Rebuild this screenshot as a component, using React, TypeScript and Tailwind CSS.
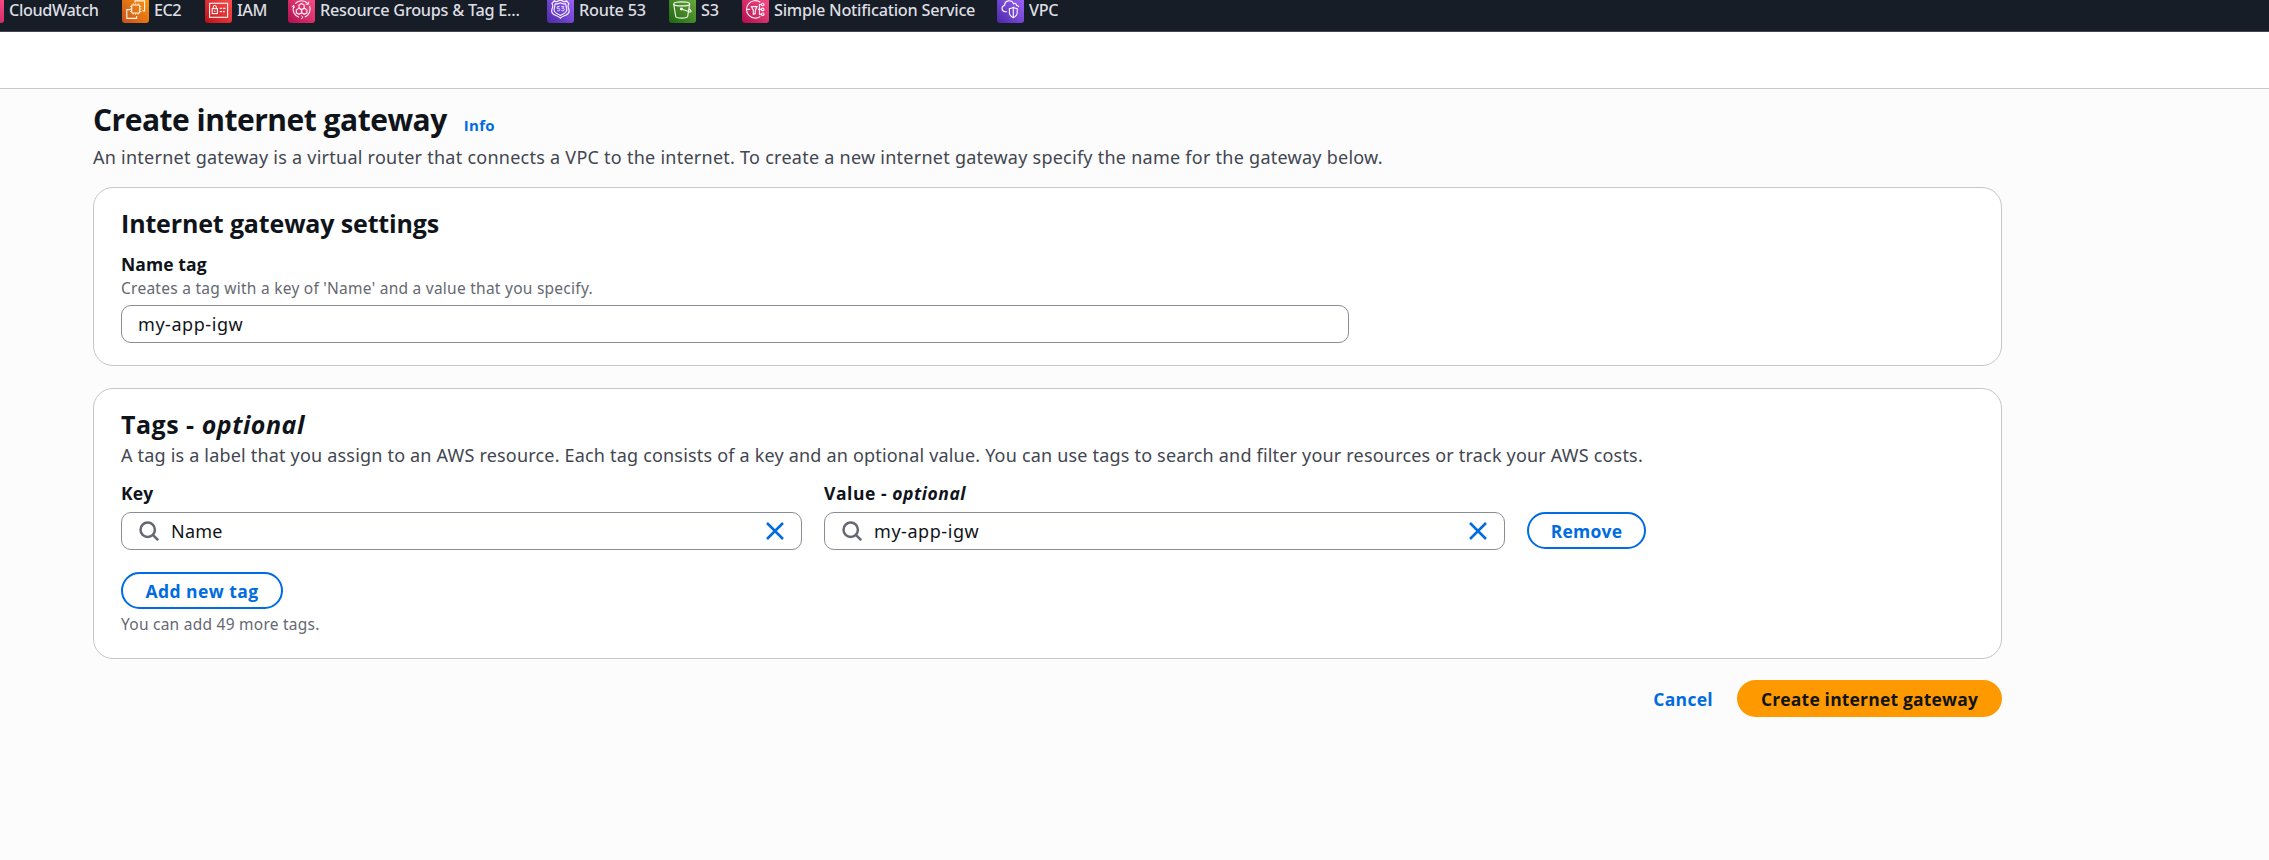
import type { ReactNode } from 'react';

function ServiceIcon({ gradient, children }: { gradient: string; children?: ReactNode }) {
  return (
    <span className={`block size-[27px] shrink-0 rounded-[3px] bg-linear-to-tr ${gradient}`}>
      <svg viewBox="0 0 27 27" className="size-full" fill="none" stroke="#fff" strokeOpacity="0.92" strokeWidth="1.15">
        {children}
      </svg>
    </span>
  );
}

const services: { label: string; width: string; tracking: string; gradient: string; glyph: ReactNode }[] = [
  {
    label: 'CloudWatch',
    width: 'w-[145px]',
    tracking: 'tracking-[-0.4px]',
    gradient: 'from-[#b0084d] to-[#ff4f8b]',
    glyph: <circle cx="12" cy="13" r="7" />,
  },
  {
    label: 'EC2',
    width: 'w-[83px]',
    tracking: 'tracking-[-0.5px]',
    gradient: 'from-[#c8511b] to-[#ff9900]',
    glyph: (
      <>
        <rect x="9.7" y="9" width="8" height="8" rx="0.8" />
        <path d="M11.2 9V7.3M13.7 9V7.3M16.2 9V7.3M11.2 18.7V17M13.7 18.7V17M16.2 18.7V17M9.7 10.5H8M9.7 13H8M9.7 15.5H8M19.4 10.5h-1.7M19.4 13h-1.7M19.4 15.5h-1.7" strokeWidth="0.8" />
        <path d="M13 6.4V4.9h9.6v10H20.6M8.4 13.6H4.8v8.7h9.8v-2.2" />
      </>
    ),
  },
  {
    label: 'IAM',
    width: 'w-[83px]',
    tracking: 'tracking-[-0.4px]',
    gradient: 'from-[#bd0816] to-[#ff5252]',
    glyph: (
      <>
        <rect x="4.6" y="7.3" width="18" height="14" />
        <rect x="7.2" y="12.6" width="5.2" height="5" />
        <path d="M8.2 12.6v-1.3a1.6 1.8 0 0 1 3.2 0v1.3M9.8 14.4v1.6M14.8 12.4h2.1M18 12.4h2.4M14.8 15.6h2.1M18 15.6h1.8" />
      </>
    ),
  },
  {
    label: 'Resource Groups & Tag E...',
    width: 'w-[259px]',
    tracking: 'tracking-[-0.26px]',
    gradient: 'from-[#b0084d] to-[#ff4f8b]',
    glyph: (
      <>
        <path d="M7.2 7.6a8.6 8.6 0 0 1 12.8 0M21.6 10a8.6 8.6 0 0 1-4.8 11M11 21.3A8.6 8.6 0 0 1 5.6 10.4" />
        <path d="M20.8 5.6l-.3 2.8-2.8-.3M6.4 11.8 5.7 9.3l-2 1.6M13.2 19.6l1.9 1.8-2 1.5" strokeWidth="1" />
        <path d="M13.6 7.5l2.6 1.5v3l-2.6 1.5L11 12V9zM10.9 12.3l2.6 1.5v3l-2.6 1.5-2.6-1.5v-3zM16.3 12.3l2.6 1.5v3l-2.6 1.5-2.6-1.5v-3z" />
      </>
    ),
  },
  {
    label: 'Route 53',
    width: 'w-[122px]',
    tracking: 'tracking-[-0.25px]',
    gradient: 'from-[#4d27a8] to-[#a166ff]',
    glyph: (
      <>
        <path d="M7.3 4.8c1.4 1 3 .9 4.2-.1 1.2-.8 2.6-.8 3.8 0 1.2 1 2.8 1.1 4.2.1l2.4 2.7c-1.5 2-.9 3.800-.1 5.600.8 2.400-.5 5-3.300 6.200-2 .9-3.600 1.300-5.100 2.900-1.500-1.600-3.100-2-5.100-2.900-2.800-1.200-4.100-3.800-3.300-6.200.8-1.800 1.400-3.600-.1-5.600z" />
        <path d="M8.3 7.7c1.7.5 3.1.2 5.100-.9 2 1.1 3.400 1.400 5.100.9.5 1.900 1 3.700 1.300 5.900.2 3.200-3.400 4.200-6.400 5.900-3-1.700-6.600-2.700-6.400-5.900.3-2.200.8-4 1.300-5.900z" />
        <path d="M12.7 10.6h-2.500v1.900c2.300-.5 2.800.5 2.600 1.400-.2 1.100-1.600 1.300-2.800.7M14.300 10.600h2.500l-1.400 1.800c1.500 0 2 .7 1.700 1.600-.3 1-1.700 1.100-2.800.6" strokeWidth="0.9" />
      </>
    ),
  },
  {
    label: 'S3',
    width: 'w-[73px]',
    tracking: 'tracking-[-0.3px]',
    gradient: 'from-[#1b660f] to-[#6cae3e]',
    glyph: (
      <>
        <ellipse cx="12.7" cy="7.9" rx="8" ry="2" />
        <path d="M4.7 8l2 12.4c.6 2.300 11.400 2.300 12 0L20.7 8M12.600 13l8.300 3c1.900.2 1.300-1.800-.9-3.200" />
        <circle cx="12.4" cy="12.9" r="0.9" fill="#fff" />
      </>
    ),
  },
  {
    label: 'Simple Notification Service',
    width: 'w-[255px]',
    tracking: 'tracking-[-0.24px]',
    gradient: 'from-[#b0084d] to-[#ff4f8b]',
    glyph: (
      <>
        <path d="M18.3 6.3a8.7 8.7 0 1 0 0 14.2M4.8 13.3h3.4M9.4 10.6h5.6l-1.7 3.6v3.4l-2 .8v-4.2z" />
        <path d="M19.5 8.5h-2v9.8h2M16 13.4h3.5" />
        <circle cx="20.7" cy="8.5" r="1.3" />
        <circle cx="20.7" cy="13.4" r="1.3" />
        <circle cx="20.7" cy="18.3" r="1.3" />
      </>
    ),
  },
  {
    label: 'VPC',
    width: 'w-[80px]',
    tracking: 'tracking-[-0.3px]',
    gradient: 'from-[#4d27a8] to-[#a166ff]',
    glyph: (
      <>
        <path d="M10.2 15.700H8.300c-4.300-.6-4.200-5.500-.7-6.300.1-5.200 7.200-6.300 9-1.600 1.200-.9 2.900-.1 3 1.600 1 .2 1.900.7 2.300 1.500" />
        <path d="M16.3 11.3c1.400 1 2.600 1.300 3.900 1.300v4.2c0 2.300-1.600 3.700-3.900 4.900-2.300-1.200-3.900-2.600-3.900-4.900v-4.200c1.300 0 2.500-.3 3.900-1.300zM16.300 11.300v10.400" />
      </>
    ),
  },
];

function SearchIcon() {
  return (
    <svg viewBox="0 0 20 20" className="size-5 shrink-0" fill="none" stroke="#656871" strokeWidth="2.5">
      <circle cx="8.7" cy="8.7" r="7.2" />
      <path d="M13.8 13.8l5.4 5.4" />
    </svg>
  );
}

function ClearIcon() {
  return (
    <svg viewBox="0 0 18 18" className="size-[18px] shrink-0" fill="none" stroke="#006ce0" strokeWidth="2.5">
      <path d="M1 1l16 16M17 1L1 17" />
    </svg>
  );
}

function SearchField({ value, tracking }: { value: string; tracking: string }) {
  return (
    <div className="mt-[7px] flex h-[38px] items-center rounded-[10px] border border-[#8c8c94] bg-white px-[17px]">
      <SearchIcon />
      <span className={`ml-3 grow text-[18px] leading-[26px] ${tracking}`}>{value}</span>
      <ClearIcon />
    </div>
  );
}

const bold = "font-['Open_Sans','Noto_Sans',sans-serif] font-bold";

export default function App() {
  return (
    <div className="h-[860px] overflow-hidden bg-[#fcfcfd] font-['Noto_Sans','Open_Sans',sans-serif] whitespace-nowrap text-[#0f141a]">
      <header className="h-8 overflow-hidden border-b border-[#424650] bg-[#161d26]">
        <nav className="-mt-1 -ml-[23px] flex">
          {services.map((s) => (
            <a key={s.label} className={`flex h-[27px] shrink-0 items-center gap-[5px] ${s.width}`}>
              <ServiceIcon gradient={s.gradient}>{s.glyph}</ServiceIcon>
              <span className={`text-[16.25px] leading-[18px] font-medium text-[#dedee3] ${s.tracking}`}>{s.label}</span>
            </a>
          ))}
        </nav>
      </header>
      <div className="h-[57px] border-b border-[#c6c6cd] bg-white" />

      <main className="ml-[93px] w-[1909px] pt-[13px]">
        <div className="flex items-baseline">
          <h1 className={`${bold} text-[30px] leading-9 tracking-[-0.5px]`}>Create internet gateway</h1>
          <a className={`${bold} ml-[17px] text-[15px] leading-5 tracking-[0.3px] text-[#006ce0]`}>Info</a>
        </div>
        <p className="mt-1.5 text-[18px] leading-[26px] tracking-[0.255px] text-[#424650]">
          An internet gateway is a virtual router that connects a VPC to the internet. To create a new internet gateway specify the name for the gateway below.
        </p>

        <section className="mt-[17px] rounded-[20px] border border-[#c6c6cd] bg-white px-[27px] pt-5 pb-[22px]">
          <h2 className={`${bold} text-[25px] leading-[30px] tracking-[-0.15px]`}>Internet gateway settings</h2>
          <label className={`${bold} mt-3.5 block text-[17.5px] leading-6 tracking-[0.1px]`}>Name tag</label>
          <p className="mt-0.5 text-[15.5px] leading-5 tracking-[0.255px] text-[#656871]">
            Creates a tag with a key of 'Name' and a value that you specify.
          </p>
          <div className="mt-[7px] flex h-[38px] w-[1228px] items-center rounded-[10px] border border-[#8c8c94] bg-white px-4">
            <span className="text-[18px] leading-[26px] tracking-[0.55px]">my-app-igw</span>
          </div>
        </section>

        <section className="mt-[22px] rounded-[20px] border border-[#c6c6cd] bg-white px-[27px] pt-5 pb-6">
          <h2 className={`${bold} text-[25px] leading-[30px] tracking-[0.5px]`}>
            Tags - <em>optional</em>
          </h2>
          <p className="mt-[3px] text-[18px] leading-[26px] tracking-[0.19px] text-[#424650]">
            A tag is a label that you assign to an AWS resource. Each tag consists of a key and an optional value. You can use tags to search and filter your resources or track your AWS costs.
          </p>
          <div className="mt-[13px] flex items-end gap-[22px]">
            <div className="w-[681px]">
              <label className={`${bold} block text-[17.5px] leading-6 tracking-[0.2px]`}>Key</label>
              <SearchField value="Name" tracking="tracking-[0.2px]" />
            </div>
            <div className="w-[681px]">
              <label className={`${bold} block text-[17.5px] leading-6 tracking-[0.55px]`}>
                Value - <em>optional</em>
              </label>
              <SearchField value="my-app-igw" tracking="tracking-[0.55px]" />
            </div>
            <button className={`${bold} mb-px h-[37px] w-[119px] rounded-full border-2 border-[#006ce0] text-[17.5px] leading-6 tracking-[0.2px] text-[#006ce0]`}>
              Remove
            </button>
          </div>
          <button className={`${bold} mt-[22px] block h-[37px] w-[162px] rounded-full border-2 border-[#006ce0] text-[17.5px] leading-6 tracking-[0.45px] text-[#006ce0]`}>
            Add new tag
          </button>
          <p className="mt-[5px] text-[15.5px] leading-5 tracking-[0.25px] text-[#656871]">You can add 49 more tags.</p>
        </section>

        <div className="mt-[21px] flex items-center justify-end gap-6">
          <button className={`${bold} text-[17.5px] leading-6 tracking-[0.3px] text-[#006ce0]`}>Cancel</button>
          <button className={`${bold} h-[37px] w-[265px] rounded-full bg-[#ff9900] text-[17.5px] leading-6 tracking-[0.18px]`}>
            Create internet gateway
          </button>
        </div>
      </main>
    </div>
  );
}
